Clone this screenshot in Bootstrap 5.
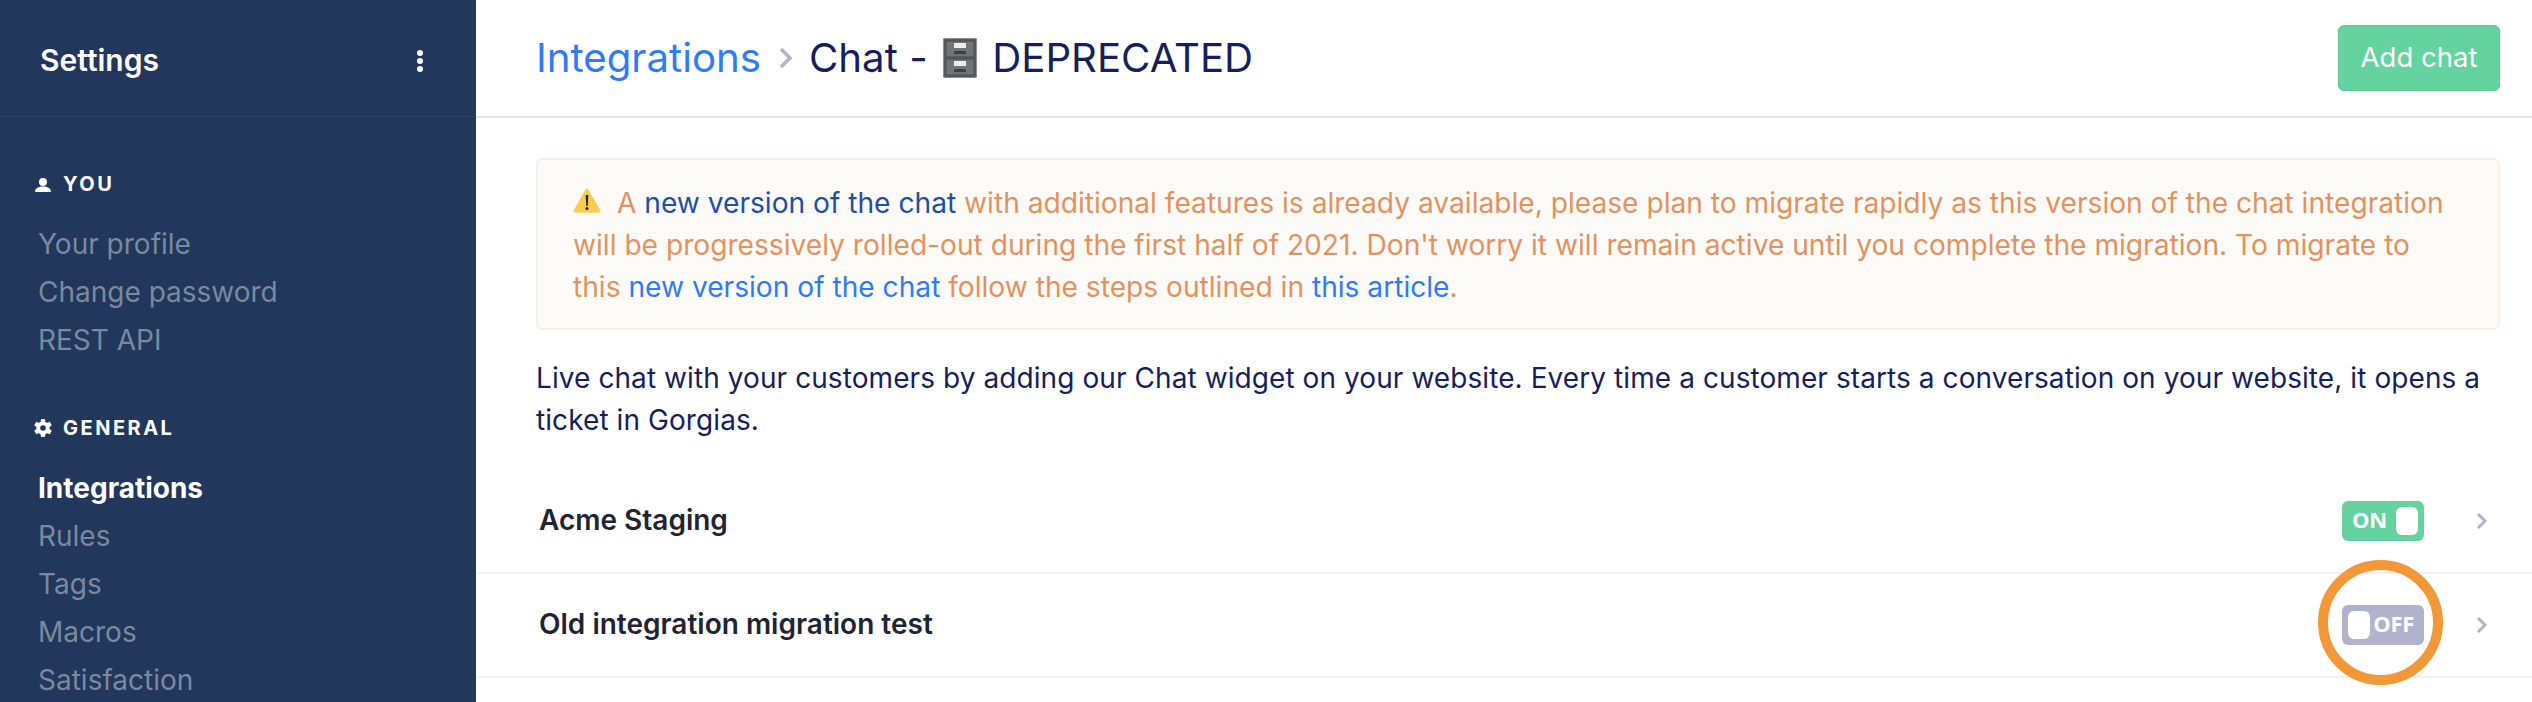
<!DOCTYPE html>
<html lang="en">
<head>
  <meta charset="UTF-8" />
  <title>Chat integrations</title>
  <link href="https://cdn.jsdelivr.net/npm/bootstrap@5.3.3/dist/css/bootstrap.min.css" rel="stylesheet">
  <style>
    html, body { height: 702px; overflow: hidden; }
    body { font-family: Inter, "Liberation Sans", sans-serif; font-size: 28px; color: #161f5c; background: #fff; }
    a { text-decoration: none; }

    .side-panel { width: 476px; height: 702px; flex: none; background: #21375b; overflow: hidden; }
    .side-head { height: 117px; padding: 5px 52px 0 40px; border-bottom: 1px solid #2c4366; }
    .side-title { font-size: 30px; font-weight: 600; color: #fff; }
    .side-group { padding-left: 34px; padding-top: 49px; }
    .side-group.first-group { padding-top: 52px; }
    .side-label { height: 30px; margin-bottom: 21px; font-size: 20px; font-weight: 700; letter-spacing: 2.5px; color: #fff; }
    .side-label svg { width: 20px; margin-right: 9px; }
    .side-link { display: block; height: 48px; line-height: 48px; padding-left: 4px; font-size: 28px; color: #7a899f; }
    .side-link.current { font-weight: 700; color: #fff; }

    .main-panel { min-width: 0; }
    .top-bar { height: 118px; padding: 0 32px 0 60px; border-bottom: 2px solid #e3e3ee; }
    .crumbs { font-size: 40.2px; }
    .crumbs a { color: #2f7bf5; }
    .crumb-sep { width: 18px; height: 26px; margin: 0 14px 0 16px; }
    .btn-add { height: 66px; width: 162px; padding: 0; font-size: 27.5px; color: #fff; background: #64d3a0; border: 1px solid #5cc796; border-radius: 6px; }
    .content-area { padding: 40px 32px 0 60px; }
    .note-box { height: 172px; padding: 22px 35px; margin-bottom: 27px; font-size: 28.15px; line-height: 42px; background: #fdfbf8; border: 2px solid #fdeee2; border-radius: 6px; color: #e3925f; white-space: nowrap; }
    .note-box a { color: #2f7bf5; }
    .note-box a.dark-link { color: #1d4fa8; }
    .intro-text { margin-bottom: 29px; letter-spacing: .08px; line-height: 42px; }
    .int-row { height: 104px; margin-left: -60px; margin-right: -32px; padding: 0 32px 0 63px; border-bottom: 2px solid #f0f0f5; }
    .int-name { padding-bottom: 2px; font-weight: 600; color: #1f2433; }
    .state-pill { width: 82px; height: 40px; padding: 6px; border-radius: 6px; font-family: "Open Sans", sans-serif; font-size: 22px; font-weight: 700; letter-spacing: -.3px; color: #fff; }
    .state-pill i { display: block; width: 22px; height: 28px; border-radius: 6px; background: #fff; }
    .state-pill span { margin-bottom: 4px; }
    .state-on { background: #64d3a0; }
    .state-on span { margin-left: 4px; }
    .state-off { background: #b1b3cc; }
    .state-off span { margin-right: 4px; }
    .row-arrow { width: 12px; height: 18px; margin-left: 52px; margin-right: 12px; }
    .ring-mark { position: absolute; left: 2318px; top: 560px; width: 125px; height: 125px; border: 10px solid #f29838; border-radius: 50%; }
  </style>
</head>
<body>

  <div class="d-flex">
    <!-- Sidebar -->
    <nav class="side-panel">
      <div class="side-head d-flex align-items-center justify-content-between">
        <span class="side-title">Settings</span>
        <svg width="8" height="24" viewBox="0 0 8 24" fill="#fff"><circle cx="4" cy="4" r="3"/><circle cx="4" cy="12" r="3"/><circle cx="4" cy="20" r="3"/></svg>
      </div>
      <div class="side-group first-group">
        <div class="side-label d-flex align-items-center">
          <svg viewBox="0 0 20 20" fill="#fff"><circle cx="9" cy="8" r="4"/><path d="M1 18c0-4 4-5.500 8-5.500s8 1.500 8 5.500z"/></svg>YOU
        </div>
        <a class="side-link" href="#">Your profile</a>
        <a class="side-link" href="#">Change password</a>
        <a class="side-link" href="#">REST API</a>
      </div>
      <div class="side-group">
        <div class="side-label d-flex align-items-center">
          <svg viewBox="0 0 20 20" fill="#fff">
            <g transform="translate(9 10)">
              <circle r="6.600"/>
              <rect x="-2.200" y="-9" width="4.400" height="18" rx="1"/>
              <rect x="-2.200" y="-9" width="4.400" height="18" rx="1" transform="rotate(60)"/>
              <rect x="-2.200" y="-9" width="4.400" height="18" rx="1" transform="rotate(120)"/>
              <circle r="2.800" fill="#21375b"/>
            </g>
          </svg>GENERAL
        </div>
        <a class="side-link current" href="#">Integrations</a>
        <a class="side-link" href="#">Rules</a>
        <a class="side-link" href="#">Tags</a>
        <a class="side-link" href="#">Macros</a>
        <a class="side-link" href="#">Satisfaction</a>
      </div>
    </nav>

    <!-- Main -->
    <main class="main-panel flex-grow-1">
      <div class="top-bar d-flex align-items-center justify-content-between">
        <div class="crumbs d-flex align-items-center">
          <a href="#">Integrations</a>
          <svg class="crumb-sep" viewBox="0 0 18 26" fill="none" stroke="#b1b3cc" stroke-width="3.500"><path d="M4 4l9 9-9 9"/></svg>
          <span>Chat -&nbsp;</span>
          <svg class="mx-1" width="34" height="40" viewBox="0 0 34 40">
            <rect width="34" height="40" rx="2" fill="#565a5c"/>
            <rect x="0.500" y="0.500" width="33" height="39" rx="2" fill="none" stroke="#8b9092"/>
            <rect x="3" y="3" width="28" height="16" fill="#6f7577" stroke="#494d4f"/>
            <rect x="3" y="21" width="28" height="16" fill="#6f7577" stroke="#494d4f"/>
            <rect x="11" y="5" width="12" height="5" fill="#eceeee"/>
            <rect x="11" y="23" width="12" height="5" fill="#eceeee"/>
            <rect x="11" y="13" width="12" height="3" rx="1" fill="#3b3f40"/>
            <rect x="11" y="31" width="12" height="3" rx="1" fill="#3b3f40"/>
          </svg>
          <span>&nbsp;DEPRECATED</span>
        </div>
        <button class="btn btn-add" type="button">Add chat</button>
      </div>

      <div class="content-area">
        <div class="note-box">
          <svg class="me-2 align-baseline" width="28" height="25" viewBox="0 0 28 25"><path d="M14 2L2 23h24z" fill="#fdcb4f" stroke="#fdcb4f" stroke-width="3" stroke-linejoin="round"/><path d="M12.600 7h2.800l-.7 11h-1.400z" fill="#222"/><circle cx="14" cy="20.500" r="1.500" fill="#222"/></svg>
          A <a class="dark-link" href="#">new version of the chat</a> with additional features is already available, please plan to migrate rapidly as this version of the chat integration<br>
          will be progressively rolled-out during the first half of 2021. Don't worry it will remain active until you complete the migration. To migrate to<br>
          this <a href="#">new version of the chat</a> follow the steps outlined in <a href="#">this article</a>.
        </div>
        <p class="intro-text">Live chat with your customers by adding our Chat widget on your website. Every time a customer starts a conversation on your website, it opens a ticket in Gorgias.</p>
        <div class="int-row d-flex align-items-center justify-content-between">
          <span class="int-name">Acme Staging</span>
          <div class="d-flex align-items-center">
            <div class="state-pill state-on d-flex align-items-center justify-content-between"><span>ON</span><i></i></div>
            <svg class="row-arrow" viewBox="0 0 12 18" fill="none" stroke="#b1b3cc" stroke-width="3"><path d="M2 2l7 7-7 7"/></svg>
          </div>
        </div>
        <div class="int-row d-flex align-items-center justify-content-between">
          <span class="int-name">Old integration migration test</span>
          <div class="d-flex align-items-center">
            <div class="state-pill state-off d-flex align-items-center justify-content-between"><i></i><span>OFF</span></div>
            <svg class="row-arrow" viewBox="0 0 12 18" fill="none" stroke="#b1b3cc" stroke-width="3"><path d="M2 2l7 7-7 7"/></svg>
          </div>
        </div>
      </div>
    </main>
  </div>

  <div class="ring-mark"></div>

  <script src="https://cdn.jsdelivr.net/npm/bootstrap@5.3.3/dist/js/bootstrap.bundle.min.js"></script>
</body>
</html>
